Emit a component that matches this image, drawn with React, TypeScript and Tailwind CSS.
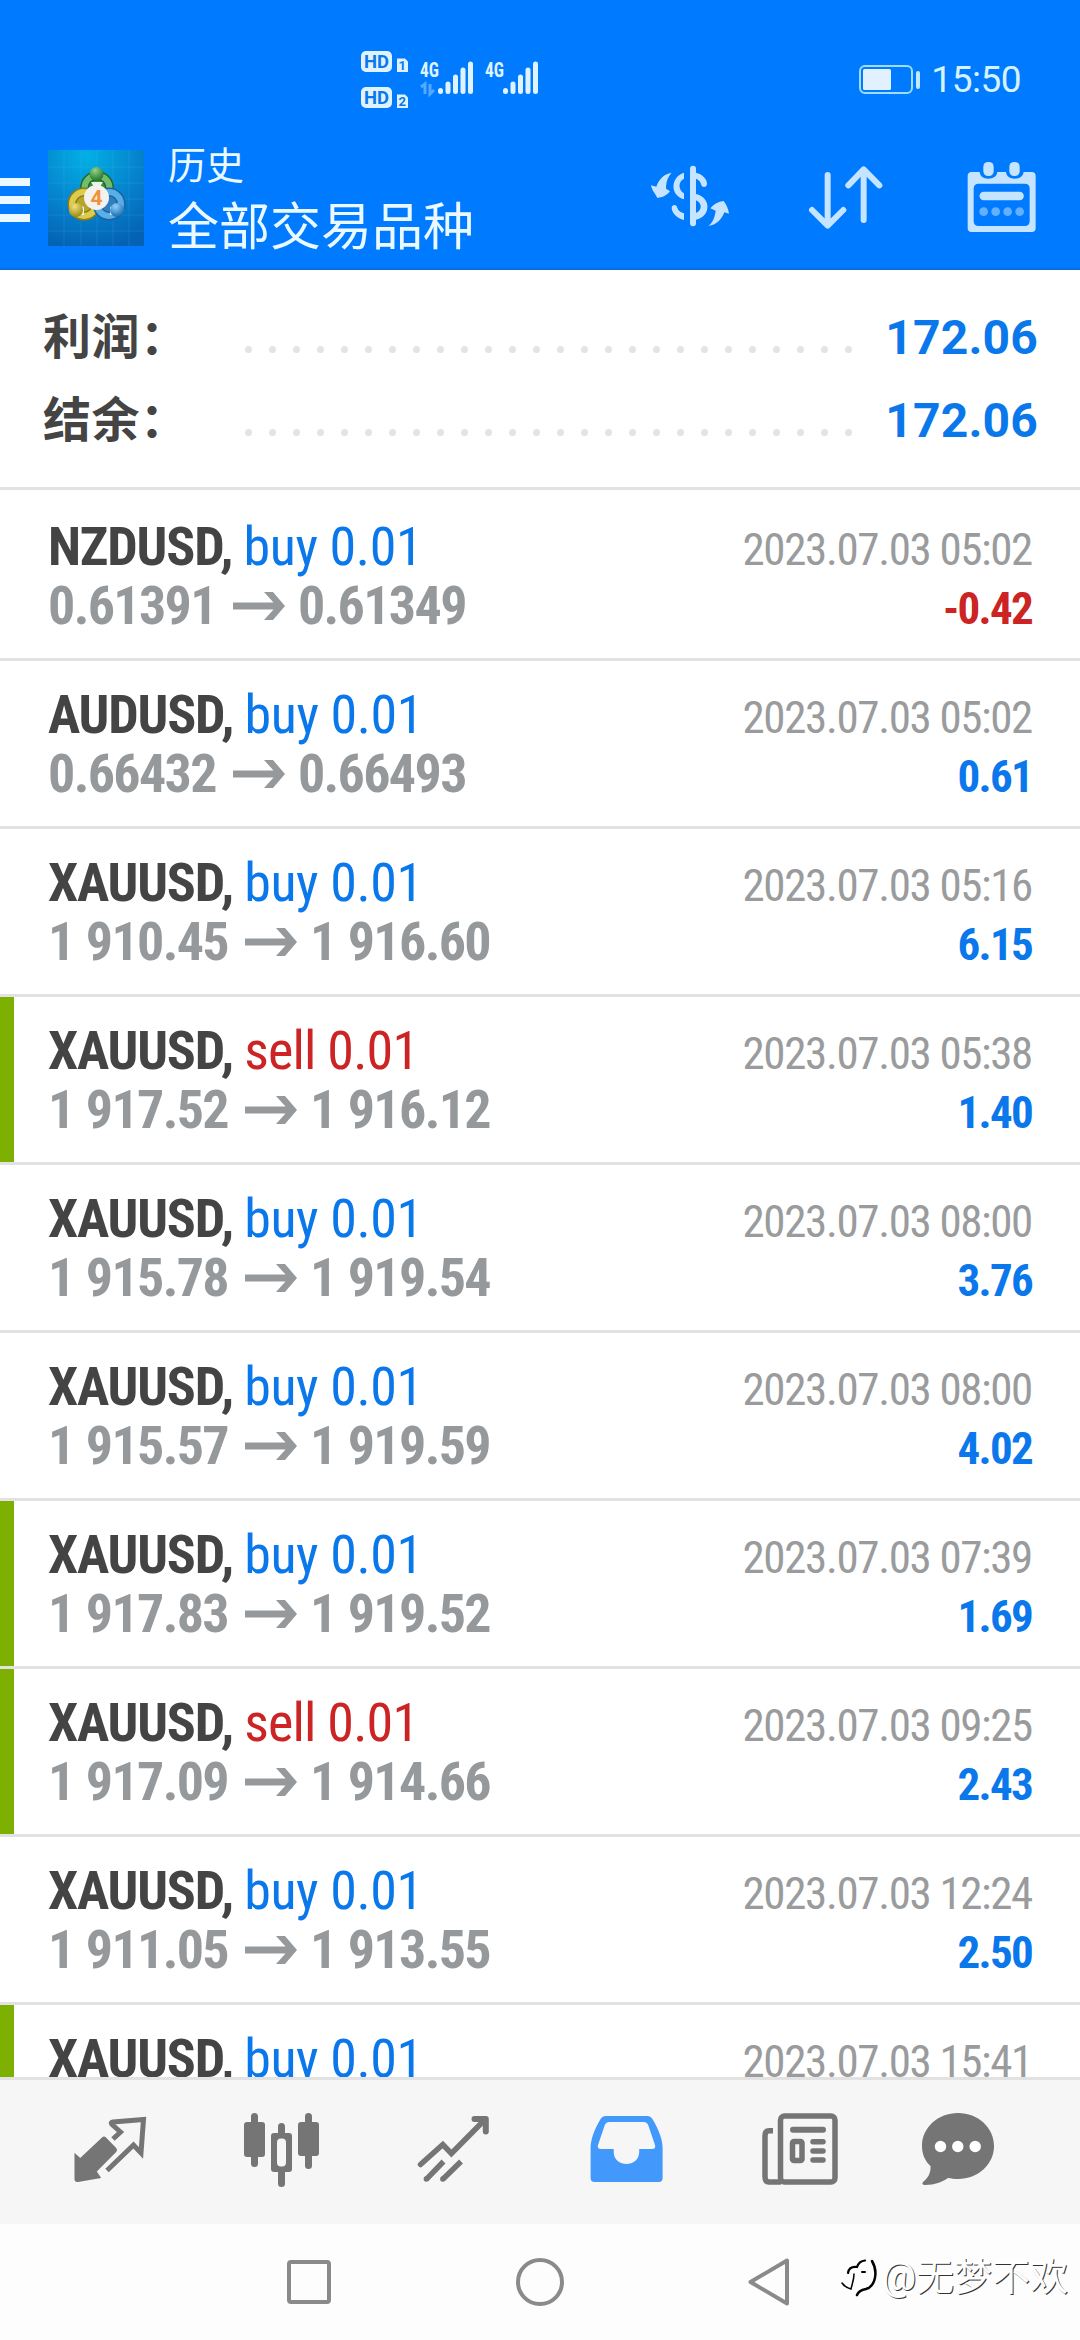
type Deal = {
  symbol: string;
  side: "buy" | "sell";
  open: string;
  close: string;
  time: string;
  profit: string;
  marked?: boolean;
};

const deals: Deal[] = [
  { symbol: "NZDUSD", side: "buy", open: "0.61391", close: "0.61349", time: "2023.07.03 05:02", profit: "-0.42" },
  { symbol: "AUDUSD", side: "buy", open: "0.66432", close: "0.66493", time: "2023.07.03 05:02", profit: "0.61" },
  { symbol: "XAUUSD", side: "buy", open: "1 910.45", close: "1 916.60", time: "2023.07.03 05:16", profit: "6.15" },
  { symbol: "XAUUSD", side: "sell", open: "1 917.52", close: "1 916.12", time: "2023.07.03 05:38", profit: "1.40", marked: true },
  { symbol: "XAUUSD", side: "buy", open: "1 915.78", close: "1 919.54", time: "2023.07.03 08:00", profit: "3.76" },
  { symbol: "XAUUSD", side: "buy", open: "1 915.57", close: "1 919.59", time: "2023.07.03 08:00", profit: "4.02" },
  { symbol: "XAUUSD", side: "buy", open: "1 917.83", close: "1 919.52", time: "2023.07.03 07:39", profit: "1.69", marked: true },
  { symbol: "XAUUSD", side: "sell", open: "1 917.09", close: "1 914.66", time: "2023.07.03 09:25", profit: "2.43", marked: true },
  { symbol: "XAUUSD", side: "buy", open: "1 911.05", close: "1 913.55", time: "2023.07.03 12:24", profit: "2.50" },
  { symbol: "XAUUSD", side: "buy", open: "", close: "", time: "2023.07.03 15:41", profit: "", marked: true },
];

const Signal = () => (
  <svg width="180" height="64" viewBox="0 0 180 64" className="font-['Roboto_Condensed'] font-bold">
    <g fill="#dff3ff">
      <rect x="1" y="2" width="31" height="21" rx="5" />
      <rect x="1" y="38" width="31" height="21" rx="5" />
      <path d="M37 9.500h8l3 3v10.500h-11z" />
      <path d="M37 45.500h8l3 3v10.500h-11z" />
      <text x="60" y="27.500" fontSize="20" textLength="19" lengthAdjust="spacingAndGlyphs">4G</text>
      <text x="125" y="27.500" fontSize="20" textLength="19" lengthAdjust="spacingAndGlyphs">4G</text>
    </g>
    <g fill="#0a78ec" className="font-['Roboto']">
      <text x="4" y="19" fontSize="18.500" textLength="25" lengthAdjust="spacingAndGlyphs">HD</text>
      <text x="4" y="55" fontSize="18.500" textLength="25" lengthAdjust="spacingAndGlyphs">HD</text>
      <text x="38.500" y="21" fontSize="13">1</text>
      <text x="38.500" y="57" fontSize="13">2</text>
    </g>
    <g stroke="#dff3ff" strokeWidth="5" strokeLinecap="round">
      <path d="M80.500 41.500v1M88 35v7.500M95.500 28v14.500M103 21v21.500M110.500 15v27.500" />
      <path d="M145.500 41.500v1M153 35v7.500M160.500 28v14.500M168 21v21.500M175.500 15v27.500" />
    </g>
    <path d="M61 38l4-3v10M70 35v10l4-4" fill="none" stroke="#55aaff" strokeWidth="3" />
  </svg>
);

const Battery = () => (
  <svg width="62" height="30" viewBox="0 0 62 30">
    <rect x="1" y="1" width="52" height="27" rx="5" fill="none" stroke="#9fdcff" strokeWidth="2" />
    <rect x="4" y="4" width="28" height="21" rx="1.500" fill="#e2f1ff" />
    <rect x="57" y="6" width="4" height="18" rx="2" fill="#c4e9ff" />
  </svg>
);

const AppIcon = () => (
  <svg width="96" height="96" viewBox="0 0 96 96">
    <defs>
      <radialGradient id="tile" cx="0.4" cy="0.05" r="1">
        <stop offset="0" stopColor="#02b0e6" />
        <stop offset="0.5" stopColor="#0587cf" />
        <stop offset="1" stopColor="#0461b4" />
      </radialGradient>
      <radialGradient id="green" cx="0.4" cy="0.25" r="0.8">
        <stop offset="0" stopColor="#8fd48a" />
        <stop offset="1" stopColor="#1e6f24" />
      </radialGradient>
      <radialGradient id="gold" cx="0.4" cy="0.25" r="0.8">
        <stop offset="0" stopColor="#f2e27a" />
        <stop offset="1" stopColor="#94850f" />
      </radialGradient>
      <radialGradient id="azure" cx="0.4" cy="0.25" r="0.8">
        <stop offset="0" stopColor="#8fd0fa" />
        <stop offset="1" stopColor="#1264ad" />
      </radialGradient>
    </defs>
    <rect width="96" height="96" fill="url(#tile)" />
    <path d="M0 17h96M0 33h96M0 49h96M0 65h96M0 81h96M16 0v96M33 0v96M49 0v96M65 0v96M81 0v96" stroke="#7fd0f5" strokeOpacity="0.14" />
    <g fill="none">
      <circle cx="49" cy="38" r="12.500" fill="#3d8a3c" stroke="#1d6a2a" strokeWidth="9" />
      <circle cx="49" cy="38" r="12.500" stroke="#72bd6c" strokeWidth="6" />
      <circle cx="36" cy="54" r="12" fill="#b5a52c" stroke="#8a7d14" strokeWidth="9" />
      <circle cx="36" cy="54" r="12" stroke="#dccb4d" strokeWidth="6" />
      <circle cx="61" cy="54" r="12" fill="#2f7fc0" stroke="#1c639f" strokeWidth="9" />
      <circle cx="61" cy="54" r="12" stroke="#57aee8" strokeWidth="6" />
    </g>
    <path d="M43 32h12l-3 5h-6zM30 55l6 2v8h-5zM68 55l-6 2v8h5z" fill="#e8f4e4" />
    <circle cx="48.500" cy="24" r="7" fill="url(#green)" />
    <circle cx="28" cy="60" r="7" fill="url(#gold)" />
    <circle cx="69" cy="60" r="7" fill="url(#azure)" />
    <circle cx="48.500" cy="47.500" r="12.500" fill="#f4f2ef" />
    <text x="48.500" y="55" textAnchor="middle" fontSize="21" fill="#f0923a" className="font-['Roboto'] font-bold">
      4
    </text>
  </svg>
);

const CurrencyIcon = () => (
  <svg width="80" height="72" viewBox="90 63 240 216" fill="#c5e4ff">
    <path d="M219 86v164" stroke="#c5e4ff" strokeWidth="18" strokeLinecap="round" />
    <path d="M192 98v18c-18 8-18 34 0 44v18c-42-12-42-66 0-80zM228 98c18 4 33 18 33 33 0 12-16 13-18 2-1-8-7-13-15-17zM228 162c46 10 46 68 0 77v-20c19-8 19-30 0-38zM172 203c2 9 10 14 20 17v20c-20-4-36-20-37-36 0-11 15-12 17-1z" />
    <path d="M155 98c-13 14-17 30-17 48l12 8c-10 13-22 18-38 20-6-13-17-24-19-38l16 4c8-22 22-38 46-42zM265 258c15-12 20-30 22-46l-16-7c10-13 24-20 40-22 8 11 14 23 16 38l-14-4c-8 22-24 38-48 41z" />
  </svg>
);

const SortIcon = () => (
  <svg width="78" height="72" viewBox="562 63 234 216" fill="none" stroke="#c5e4ff" strokeWidth="18" strokeLinecap="round" strokeLinejoin="round">
    <path d="M624 105v151M577 210l47 47 47-47M732 240V89M686 136l46-48 47 48" />
  </svg>
);

const CalendarIcon = () => (
  <svg width="73" height="72" viewBox="1036 63 219 216">
    <path
      fillRule="evenodd"
      fill="#c5e4ff"
      d="M1056 96h24c2 14 12 20 26 20s25-6 27-20h26c2 14 12 20 26 20s25-6 27-20h24q12 0 12 12v156q0 12-12 12h-180q-12 0-12-12V108q0-12 12-12zM1077 131q-15 0-15 15v97q0 15 15 15h138q15 0 15-15v-97q0-15-15-15z"
    />
    <rect x="1091" y="66" width="31" height="42" rx="14" fill="#c5e4ff" />
    <rect x="1169" y="66" width="31" height="42" rx="14" fill="#c5e4ff" />
    <path d="M1092 168h108" stroke="#c5e4ff" strokeWidth="25" strokeLinecap="round" />
    <g fill="#63b0ff">
      <circle cx="1092" cy="215" r="13" />
      <circle cx="1128" cy="215" r="13" />
      <circle cx="1164" cy="215" r="13" />
      <circle cx="1200" cy="215" r="13" />
    </g>
  </svg>
);

const SummaryRow = ({ label, value }: { label: string; value: string }) => (
  <div className="flex h-[83px] items-center">
    <span className="w-[202px] text-[48px] leading-[83px] font-bold tracking-[0.5px] text-[#444444]">{label}</span>
    <div className="mt-[23px] flex gap-[17px]">
      {Array.from({ length: 26 }, (_, i) => (
        <span key={i} className="size-[7px] rounded-full bg-[#e4e4e4]" />
      ))}
    </div>
    <span className="ml-auto font-['Roboto'] text-[48px] leading-[83px] font-bold tracking-[0.2px] text-[#0a78eb]">{value}</span>
  </div>
);

const Arrow = () => (
  <svg width="52" height="28" viewBox="0 0 52 28" fill="#96999b" className="mr-[13px] ml-[17px]">
    <path d="M0 10.500h40.500L31 0h9l12 14-12 14h-9l9.500-10.500H0z" />
  </svg>
);

const DealRow = ({ deal }: { deal: Deal }) => (
  <div className="flex h-[168px] shrink-0 border-b-[3px] border-[#e2e2e2] font-['Roboto_Condensed']">
    <div className={deal.marked ? "w-[14px] bg-[#7db000]" : "w-[14px]"} />
    <div className="flex flex-1 justify-between pr-[48px] pl-[34px]">
      <div className="pt-6 text-[54px] leading-[59px] whitespace-nowrap">
        <div>
          <span className="font-bold tracking-[-1.200px] text-[#444444]">{deal.symbol}, </span>
          <span className={deal.side === "buy" ? "tracking-[-0.4px] text-[#0a78eb]" : "tracking-[-0.8px] text-[#cc2424]"}>
            {deal.side} 0.01
          </span>
        </div>
        {deal.open && (
          <div className="flex items-center font-bold tracking-[-1.650px] text-[#96999b] [word-spacing:1.3px]">
            <span>{deal.open}</span>
            <Arrow />
            <span>{deal.close}</span>
          </div>
        )}
      </div>
      <div className="pt-[27px] text-right text-[45px] leading-[59px] whitespace-nowrap">
        <div className="tracking-[-1.350px] text-[#999b9d]">{deal.time}</div>
        <div className={deal.profit.startsWith("-") ? "font-bold tracking-[-1.700px] text-[#cc2424]" : "font-bold tracking-[-1.700px] text-[#0a78eb]"}>
          {deal.profit}
        </div>
      </div>
    </div>
  </div>
);

const TabBar = () => (
  <nav className="flex h-[147px] shrink-0 border-t-[3px] border-[#e2e2e2] bg-[#f6f6f6] px-6">
    <svg width="172" height="144" fill="none" stroke="#757575" strokeWidth="5">
      <path d="M89 59l7.500-7-8.500-7.500q-2-2 1-2.500l30.500-2.500-2.500 33.500-7.500-8-26.500 25.500" />
      <path d="M82 57.500q-2-2-4 0L56.200 78l-5.700-5.300V99q0 3.500 3.500 3l23.200-4-4.400-6.500L92.200 72q1.800-2 0-4z" fill="#757575" stroke="none" />
    </svg>
    <svg width="172" height="144" fill="#757575">
      <path d="M58.500 36.500v47M85.500 46.500v57M112.500 36.500v49" stroke="#757575" strokeWidth="7" strokeLinecap="round" />
      <rect x="48" y="42" width="21" height="35" rx="3" />
      <rect x="75" y="53" width="21" height="39" rx="3" />
      <rect x="102" y="42" width="21" height="34" rx="3" />
      <rect x="81" y="58.500" width="9" height="28" rx="4" fill="#f6f6f6" />
    </svg>
    <svg width="172" height="144" fill="none" stroke="#757575" strokeWidth="5.500">
      <path d="M52.500 84.500l22.300-20 8.600 9L117 39.500" strokeLinecap="round" />
      <path d="M106.500 39h11.300v12.500" strokeWidth="6" strokeLinecap="round" strokeLinejoin="round" />
      <path d="M58.300 99.300l17.200-17.800M74.800 99.300L93 81.500" />
      <circle cx="58.300" cy="99" r="2.700" fill="#757575" stroke="none" />
      <circle cx="74.800" cy="99" r="2.700" fill="#757575" stroke="none" />
    </svg>
    <svg width="172" height="144" fill="#4299fb">
      <path
        fillRule="evenodd"
        d="M66 36h41q4 0 6 4c6 10 9.600 20 9.600 28v30q0 4-4 4h-64q-4 0-4-4V68c0-8 3.400-18 9.400-28q2-4 6-4zM69 42q-3 0-4 2.500l-7 20.500q-1 4 3 4h12.700v3c0 16 25.500 16 25.500 0v-3H112q4 0 3-4l-7-20.500q-1-2.500-4-2.500z"
      />
    </svg>
    <svg width="172" height="144" fill="none" stroke="#757575" strokeWidth="5.500">
      <rect x="68.500" y="36" width="54.500" height="66" rx="4" />
      <path d="M61 50.700h-4q-4 0-4 5v41q0 5.300 4 5.300h12" />
      <path d="M81 49.700h30" strokeWidth="6" strokeLinecap="round" />
      <rect x="80.500" y="61.500" width="9.500" height="19" rx="1.500" />
      <path d="M101 61.700h10M101 71h10M101 80h10" strokeLinecap="round" />
    </svg>
    <svg width="172" height="144" fill="#757575">
      <path
        fillRule="evenodd"
        d="M74 33c20 0 36 14.500 36 33s-16 33-36 33c-3.500 0-7-.5-10-1-6 4-13 7-23 7q-4-.5-2-3c5-4 8-9 7.500-16C41 81 38 74 38 66c0-18.500 16-33 36-33z"
      />
      <g fill="#ffffff">
        <circle cx="56.500" cy="66.500" r="5.700" />
        <circle cx="73.800" cy="66.500" r="5.700" />
        <circle cx="91.200" cy="66.500" r="5.700" />
      </g>
    </svg>
  </nav>
);

const SystemBar = () => (
  <div className="relative flex h-[116px] shrink-0 items-center bg-[#fdfdfd] pl-[287px]">
    <div className="size-11 rounded-[4px] border-4 border-[#8a8a8a]" />
    <div className="ml-[185px] size-12 rounded-full border-4 border-[#8a8a8a]" />
    <svg width="42" height="48" className="ml-[184px]" fill="none" stroke="#8a8a8a" strokeWidth="4" strokeLinejoin="round">
      <path d="M39 2.500v43L2.500 24z" />
    </svg>
    <div className="absolute top-[31px] left-[841px] flex items-center">
      <svg width="38" height="42" fill="none" stroke="#000000" strokeLinecap="round">
        <path d="M7 17q1-7 9-6q2-6 8-6.500" strokeWidth="2.200" />
        <path d="M31 5c6 10 4 25-6 28-5 1-8 3-9 6" strokeWidth="2.500" />
        <path d="M13 18c0 6-2 10-3 15-4-1-7-3-9-6" strokeWidth="1.500" />
        <path d="M21 16h3" strokeWidth="2" />
      </svg>
      <span className="ml-[3px] text-[38px] leading-[44px] whitespace-nowrap text-white [text-shadow:1px_1px_0_#333333]">
        @无梦不欢
      </span>
    </div>
  </div>
);

export default function App() {
  return (
    <div className="flex h-[2340px] w-[1080px] flex-col overflow-hidden bg-white font-['Roboto','Noto_Sans_CJK_SC',sans-serif]">
      <header className="h-[270px] shrink-0 border-b-2 border-[#0a70e0] bg-[#007aff] text-[#eaf8ff]">
        <div className="flex h-[124px] items-start pr-[59px] pl-[360px]">
          <div className="mt-[49px]">
            <Signal />
          </div>
          <div className="mt-[65px] ml-auto">
            <Battery />
          </div>
          <span className="mt-[58px] ml-[10px] text-[37px] leading-[44px] tracking-[-0.5px] text-[#d5f2ff]">15:50</span>
        </div>
        <div className="flex h-[146px] items-center pr-[42px]">
          <div className="mt-[6px] flex w-[30px] flex-col gap-[10px]">
            <span className="h-2 bg-[#eaf8ff]" />
            <span className="h-2 bg-[#eaf8ff]" />
            <span className="h-2 bg-[#eaf8ff]" />
          </div>
          <div className="mt-[2px] ml-[18px]">
            <AppIcon />
          </div>
          <div className="mt-[9px] ml-6 flex flex-col">
            <span className="text-[38px] leading-[50px]">历史</span>
            <span className="mt-[3px] text-[51px] leading-[68px]">全部交易品种</span>
          </div>
          <div className="ml-auto flex items-center">
            <CurrencyIcon />
            <div className="ml-[77px]">
              <SortIcon />
            </div>
            <div className="ml-20">
              <CalendarIcon />
            </div>
          </div>
        </div>
      </header>
      <section className="h-[220px] shrink-0 border-b-[3px] border-[#e2e2e2] pt-[26px] pr-[42px] pl-[43px]">
        <SummaryRow label="利润：" value="172.06" />
        <SummaryRow label="结余：" value="172.06" />
      </section>
      <main className="flex min-h-0 flex-1 flex-col overflow-hidden pt-[3px]">
        {deals.map((deal, i) => (
          <DealRow key={i} deal={deal} />
        ))}
      </main>
      <TabBar />
      <SystemBar />
    </div>
  );
}
